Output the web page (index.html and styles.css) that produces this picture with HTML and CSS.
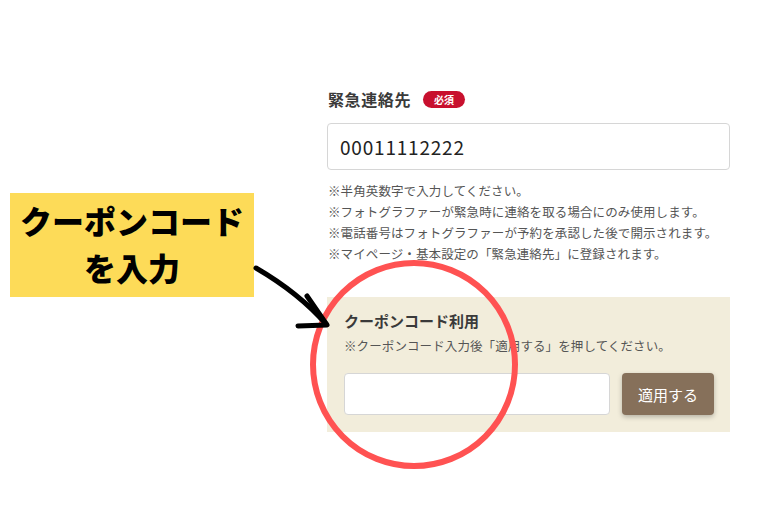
FILE: index.html
```html
<!DOCTYPE html>
<html lang="ja">
<head>
    <meta charset="UTF-8">
    <meta name="viewport" content="width=device-width, initial-scale=1.0">
    <title>クーポンコード入力</title>
    <link rel="stylesheet" href="styles.css">
</head>
<body>
    <div class="page">
        <div class="form">
            <div class="field-label">
                <span>緊急連絡先</span>
                <span class="required">必須</span>
            </div>
            <input type="text" class="text-input" value="00011112222">
            <ul class="notes">
                <li>※半角英数字で入力してください。</li>
                <li>※フォトグラファーが緊急時に連絡を取る場合にのみ使用します。</li>
                <li>※電話番号はフォトグラファーが予約を承認した後で開示されます。</li>
                <li>※マイページ・基本設定の「緊急連絡先」に登録されます。</li>
            </ul>

            <div class="coupon">
                <div class="coupon-title">クーポンコード利用</div>
                <div class="coupon-note">※クーポンコード入力後「適用する」を押してください。</div>
                <div class="coupon-row">
                    <input type="text" class="coupon-input">
                    <button class="apply">適用する</button>
                </div>
            </div>
        </div>

        <!-- annotations -->
        <div class="callout">クーポンコード<br>を入力</div>
        <svg class="marks" width="770" height="520" viewBox="0 0 770 520">
            <ellipse cx="414" cy="364.5" rx="101" ry="101.5" fill="none" stroke="#ff5252" stroke-width="6"/>
            <path d="M256 268 C 280 282, 305 300, 326 324" fill="none" stroke="#000" stroke-width="5" stroke-linecap="round"/>
            <path d="M307 296 L 327 325 L 298 326" fill="none" stroke="#000" stroke-width="5" stroke-linecap="round" stroke-linejoin="round"/>
        </svg>
    </div>
</body>
</html>
```

FILE: styles.css
```css
* {
    box-sizing: border-box;
}

body {
    margin: 0;
    background: #fff;
    font-family: "Noto Sans CJK JP", "Noto Sans", sans-serif;
    color: #333;
}

.page {
    position: relative;
    width: 770px;
    height: 520px;
    overflow: hidden;
}

.form {
    width: 403px;
    margin-left: 327px;
    padding-top: 88px;
}

.field-label {
    display: flex;
    align-items: center;
    gap: 12px;
    padding-left: 1px;
    height: 22px;
    font-size: 16px;
    letter-spacing: 0.6px;
    font-weight: bold;
    color: #3a3a3a;
}

.required {
    background: #c8102e;
    color: #fff;
    font-size: 10px;
    letter-spacing: 0;
    line-height: 17px;
    padding: 0 11px;
    border-radius: 9px;
}

.text-input {
    display: block;
    width: 100%;
    height: 47px;
    margin-top: 13px;
    padding: 0 12px;
    border: 1px solid #d6d6d6;
    border-radius: 4px;
    font-family: inherit;
    font-size: 19px;
    letter-spacing: 0.8px;
    color: #222;
    outline: none;
}

.notes {
    list-style: none;
    margin: 10px 0 0;
    padding: 0 0 0 1px;
    font-size: 12.5px;
    letter-spacing: 0.1px;
    line-height: 21px;
    color: #555;
}

.coupon {
    margin-top: 33px;
    background: #f2eddb;
    padding: 14px 16px 17px 17px;
}

.coupon-title {
    font-size: 15px;
    font-weight: bold;
    color: #3a3a3a;
    line-height: 20px;
}

.coupon-note {
    margin-top: 6px;
    font-size: 12.5px;
    letter-spacing: 0.1px;
    line-height: 18px;
    color: #555;
}

.coupon-row {
    display: flex;
    align-items: center;
    gap: 12px;
    margin-top: 18px;
}

.coupon-input {
    width: 266px;
    height: 42px;
    border: 1px solid #d6d6d6;
    border-radius: 4px;
    background: #fff;
    outline: none;
}

.apply {
    width: 92px;
    height: 42px;
    border: none;
    border-radius: 4px;
    background: #86705a;
    color: #fff;
    font-family: inherit;
    font-size: 15px;
    box-shadow: 0 2px 5px rgba(0, 0, 0, 0.25);
    cursor: pointer;
}

.callout {
    position: absolute;
    left: 10px;
    top: 193px;
    width: 244px;
    height: 104px;
    background: #fddb58;
    color: #000;
    font-size: 32px;
    font-weight: 900;
    line-height: 47px;
    text-align: center;
    padding-top: 4px;
}

.marks {
    position: absolute;
    left: 0;
    top: 0;
}
```
